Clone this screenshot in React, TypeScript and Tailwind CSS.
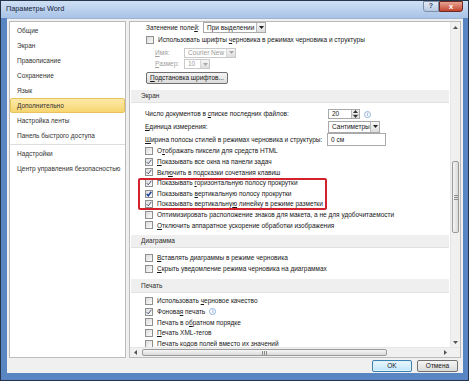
import React from 'react';

function Box({ checked = false, strong = false }: { checked?: boolean; strong?: boolean }) {
  return (
    <span className="w-[8px] h-[8px] border border-[#8e8f8f] bg-linear-to-br from-[#dcdcdc] to-[#fbfbfb] flex items-center justify-center shrink-0">
      {checked && (
        <svg width="6" height="6" viewBox="0 0 6 6">
          <path
            d="M0.7 3.1 L2.3 4.8 L5.3 0.8"
            fill="none"
            stroke={strong ? '#1d3f95' : '#4b5a78'}
            strokeWidth={strong ? 1.5 : 1}
          />
        </svg>
      )}
    </span>
  );
}

function Check({ checked, strong, children }: { checked?: boolean; strong?: boolean; children: React.ReactNode }) {
  return (
    <div className="h-[10.6px] flex items-center gap-[4px] pl-[15px]">
      <Box checked={checked} strong={strong} />
      <span className="whitespace-nowrap">{children}</span>
    </div>
  );
}

function Section({ title }: { title: string }) {
  return (
    <div className="h-[13px] mx-[1px] bg-[#efefef] border-b border-[#e2e2e2] flex items-center pl-[10px] text-[#2b2b2b]">
      {title}
    </div>
  );
}

function Arrow({ up = false, color = '#333' }: { up?: boolean; color?: string }) {
  return (
    <svg width="5" height="3" viewBox="0 0 5 3">
      <path d={up ? 'M0 3 L2.5 0 L5 3 Z' : 'M0 0 L5 0 L2.5 3 Z'} fill={color} />
    </svg>
  );
}

function Select({ text, className, disabled }: { text: string; className: string; disabled?: boolean }) {
  return (
    <div className={`border ${disabled ? 'border-[#c9c9c9] text-[#9a9a9a]' : 'border-[#a9a9a9]'} bg-white flex items-stretch ${className}`}>
      <span className="flex-1 pl-[3px] flex items-center whitespace-nowrap overflow-hidden">{text}</span>
      <span className={`w-[9px] border-l ${disabled ? 'border-[#d6d6d6]' : 'border-[#b8b8b8]'} bg-linear-to-b from-[#f6f6f6] to-[#dedede] flex items-center justify-center`}>
        <Arrow color={disabled ? '#a8a8a8' : '#222'} />
      </span>
    </div>
  );
}

function Info() {
  return (
    <span className="w-[7px] h-[7px] rounded-full border border-[#8fb3dd] text-[#7aa3d6] text-[5px] leading-none flex items-center justify-center font-bold">
      i
    </span>
  );
}

export default function App() {
  return (
    <div className="w-[469px] h-[381px] bg-[#5a85c3] border border-[#26344a] flex flex-col font-['Liberation_Sans',Arial,sans-serif] text-[6.5px] text-[#161616] overflow-hidden">
      {/* title bar */}
      <div className="h-[17px] shrink-0 bg-linear-to-b from-[#cfe0f4] to-[#a9c3e6] flex items-center pl-[5px] relative">
        <span className="text-[7.3px] text-[#16243a]">Параметры Word</span>
        <div className="absolute right-[5px] top-0 flex">
          <div className="w-[16px] h-[11px] bg-linear-to-b from-[#e3ebf5] to-[#b6c8e2] border border-[#7b8fac] rounded-bl-[3px] flex items-center justify-center text-[7px] text-[#33496b] font-bold">?</div>
          <div className="w-[24px] h-[11px] bg-linear-to-b from-[#e8a493] to-[#c2432d] border border-[#6e2a22] rounded-br-[3px] flex items-center justify-center text-[8px] text-white font-bold leading-none">x</div>
        </div>
      </div>

      {/* dialog body */}
      <div className="flex-1 ml-[6px] mr-[5px] bg-[#f0f0f0] border-t border-[#9fb4d3] flex flex-col">
        <div className="flex gap-[3px] mt-[2px] ml-[2px] h-[337px]">
          {/* left menu */}
          <div className="w-[117px] h-full border border-[#bcbcbc] bg-white pt-[1px] text-[#333]">
            {['Общие', 'Экран', 'Правописание', 'Сохранение', 'Язык'].map((t) => (
              <div key={t} className="h-[15px] flex items-center pl-[7px]">{t}</div>
            ))}
            <div className="h-[15px] flex items-center pl-[6px] bg-linear-to-b from-[#fdeaa9] to-[#f7d56e] border border-[#e8c35c] rounded-[2px]">
              Дополнительно
            </div>
            <div className="h-[15px] flex items-center pl-[7px]">Настройка ленты</div>
            <div className="h-[15px] flex items-center pl-[7px]">Панель быстрого доступа</div>
            <div className="h-px bg-[#dedede] my-px" />
            <div className="h-[15px] flex items-center pl-[7px]">Надстройки</div>
            <div className="h-[15px] flex items-center pl-[7px] whitespace-nowrap">Центр управления безопасностью</div>
          </div>

          {/* right options */}
          <div className="w-[332px] h-full border border-[#bcbcbc] bg-white flex flex-col">
            <div className="flex flex-1 min-h-0">
              <div className="flex-1 overflow-hidden">
                <div className="h-[11px] flex items-center pl-[16px]">
                  <span className="w-[57px] whitespace-nowrap">Затенение поле<u>й</u>:</span>
                  <Select text="При выделении" className="w-[63px] h-[11px]" />
                </div>
                <div className="h-[14px] flex items-center gap-[4px] pl-[16px]">
                  <Box />
                  <span className="whitespace-nowrap">Использовать шрифты <u>ч</u>ерновика в режимах черновика и структуры</span>
                </div>
                <div className="h-[11px] flex items-center pl-[25px] text-[#a0a0a0]">
                  <span className="w-[29px]"><u>И</u>мя:</span>
                  <Select text="Courier New" className="w-[52px] h-[10px]" disabled />
                </div>
                <div className="h-[12px] flex items-center pl-[25px] text-[#a0a0a0]">
                  <span className="w-[29px]"><u>Р</u>азмер:</span>
                  <Select text="10" className="w-[26px] h-[10px]" disabled />
                </div>
                <div className="h-[16px] flex items-center pl-[16px]">
                  <div className="w-[82px] h-[12px] border border-[#707070] rounded-[2px] bg-linear-to-b from-[#f4f4f4] to-[#dcdcdc] flex items-center justify-center whitespace-nowrap">
                    <u>П</u>одстановка шрифтов...
                  </div>
                </div>
                <div className="h-[4px]" />
                <Section title="Экран" />
                <div className="h-[5px]" />
                <div className="h-[12px] flex items-center pl-[15px]">
                  <span className="w-[183px] whitespace-nowrap">Число документов в <u>с</u>писке последних файлов:</span>
                  <div className="w-[32px] h-[10px] border border-[#a9a9a9] bg-white flex">
                    <span className="flex-1 pl-[3px] flex items-center">20</span>
                    <span className="w-[8px] border-l border-[#b8b8b8] flex flex-col">
                      <span className="flex-1 flex items-center justify-center bg-[#ececec] border-b border-[#c4c4c4]"><Arrow up /></span>
                      <span className="flex-1 flex items-center justify-center bg-[#e4e4e4]"><Arrow /></span>
                    </span>
                  </div>
                  <span className="ml-[4px]"><Info /></span>
                </div>
                <div className="h-[13px] flex items-center pl-[15px]">
                  <span className="w-[183px] whitespace-nowrap"><u>Е</u>диница измерения:</span>
                  <Select text="Сантиметры" className="w-[52px] h-[12px]" />
                </div>
                <div className="h-[13px] flex items-center pl-[15px]">
                  <span className="w-[182px] whitespace-nowrap"><u>Ш</u>ирина полосы стилей в режимах черновика и структуры:</span>
                  <div className="w-[59px] h-[13px] border border-[#a9a9a9] bg-white pl-[3px] flex items-center">0 см</div>
                </div>
                <Check>О<u>т</u>ображать пиксели для средств HTML</Check>
                <Check checked><u>П</u>оказывать все окна на панели задач</Check>
                <Check checked>Вкл<u>ю</u>чить в подсказки сочетания клавиш</Check>
                <div className="relative">
                  <Check checked>Показывать <u>г</u>оризонтальную полосу прокрутки</Check>
                  <Check checked strong>Показывать <u>в</u>ертикальную полосу прокрутки</Check>
                  <Check checked>Показывать вертикальну<u>ю</u> линейку в режиме разметки</Check>
                  <div className="absolute left-[8px] top-0 bottom-0 w-[189px] border-2 border-[#d3222c] rounded-[2px]" />
                </div>
                <Check>Оптимизировать расположение знаков для макета, а не для удобочитаемости</Check>
                <Check><u>О</u>тключить аппаратное ускорение обработки изображения</Check>
                <div className="h-[4px]" />
                <Section title="Диаграмма" />
                <div className="h-[5px]" />
                <Check><u>В</u>ставлять диаграммы в режиме черновика</Check>
                <Check><u>С</u>крыть уведомление режима черновика на диаграммах</Check>
                <div className="h-[5px]" />
                <div className="h-[14px] mx-[1px] bg-[#efefef] border-b border-[#e2e2e2] flex items-center pl-[10px] text-[#2b2b2b]">Печать</div>
                <div className="h-[3px]" />
                <Check>Использовать <u>ч</u>ерновое качество</Check>
                <div className="h-[10.6px] flex items-center gap-[4px] pl-[15px]">
                  <Box checked />
                  <span className="whitespace-nowrap">Фонова<u>я</u> печать</span>
                  <Info />
                </div>
                <Check>Печать в о<u>б</u>ратном порядке</Check>
                <Check><u>П</u>ечать XML-тегов</Check>
                <Check>Печать <u>к</u>одов полей вместо их значений</Check>
              </div>

              {/* vertical scrollbar */}
              <div className="w-[10px] bg-[#f0f0f0] border-l border-[#e6e6e6] flex flex-col">
                <div className="h-[10px] flex items-center justify-center"><Arrow up color="#555" /></div>
                <div className="h-[129px]" />
                <div className="h-[72px] mx-px border border-[#9a9a9a] rounded-[2px] bg-linear-to-r from-[#f5f5f5] to-[#dadada] flex flex-col items-center justify-center gap-px">
                  <span className="w-[4px] h-px bg-[#8a8a8a]" />
                  <span className="w-[4px] h-px bg-[#8a8a8a]" />
                  <span className="w-[4px] h-px bg-[#8a8a8a]" />
                </div>
                <div className="flex-1" />
                <div className="h-[10px] flex items-center justify-center"><Arrow color="#555" /></div>
              </div>
            </div>

            {/* horizontal scrollbar */}
            <div className="h-[10px] flex bg-[#f0f0f0] border-t border-[#e6e6e6]">
              <div className="w-[10px] flex items-center justify-center">
                <svg width="3" height="5" viewBox="0 0 3 5"><path d="M3 0 L0 2.5 L3 5 Z" fill="#555" /></svg>
              </div>
              <div className="w-[2px]" />
              <div className="w-[245px] my-px border border-[#9a9a9a] rounded-[2px] bg-linear-to-b from-[#f5f5f5] to-[#dadada] flex items-center justify-center gap-px">
                <span className="w-px h-[4px] bg-[#8a8a8a]" />
                <span className="w-px h-[4px] bg-[#8a8a8a]" />
                <span className="w-px h-[4px] bg-[#8a8a8a]" />
              </div>
              <div className="flex-1" />
              <div className="w-[10px] flex items-center justify-center">
                <svg width="3" height="5" viewBox="0 0 3 5"><path d="M0 0 L3 2.5 L0 5 Z" fill="#555" /></svg>
              </div>
              <div className="w-[10px] bg-[#f0f0f0]" />
            </div>
          </div>
        </div>

        {/* buttons */}
        <div className="flex justify-end gap-[5px] pr-[5px] mt-[2px]">
          <div className="w-[40px] h-[12px] border border-[#3c7fb1] rounded-[2px] bg-linear-to-b from-[#eaf6fd] to-[#bee6fd] shadow-[inset_0_0_0_1px_#dff2fc] flex items-center justify-center">OK</div>
          <div className="w-[41px] h-[12px] border border-[#707070] rounded-[2px] bg-linear-to-b from-[#f4f4f4] to-[#dcdcdc] flex items-center justify-center">Отмена</div>
        </div>
      </div>
      <div className="h-[7px] shrink-0" />
    </div>
  );
}
